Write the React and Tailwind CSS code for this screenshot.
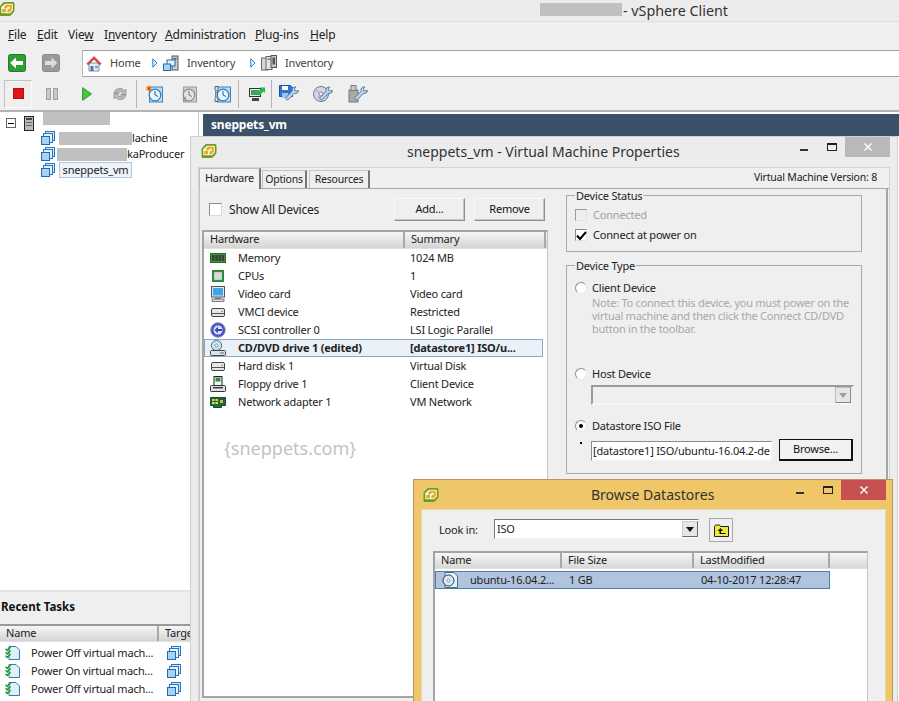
import React from "react";

const Logo = ({ className = "" }) => (
  <svg viewBox="0 0 16 16" width="16" height="16" className={className}>
    <path d="M5.500 1h8.500q1.500 0 1.500 1.500v7q0 1-.8 1.800l-2.700 2.900q-.8.800-2 .8H2q-1.500 0-1.500-1.500V6.500q0-1 .8-1.800l2.700-2.900Q4.500 1 5.500 1z" fill="#6f9c1f" />
    <path d="M6 2.800h7.200q.6 0 .6.600v6l-2.700 2.800H2.800q-.6 0-.6-.6V6z" fill="#f7f7e6" />
    <path d="M6.800 3.800h6v5.200l-2.300 2.300H8.300V9.300l1.500-1.600h1V5.800H8.800L7.200 7.500H5.300V5.500z" fill="#f0a91c" />
    <path d="M3.200 8h3.800v3.300H3.200z" fill="#e0a928" />
  </svg>
);

const VmIcon = () => (
  <svg viewBox="0 0 14 14" width="14" height="14" className="shrink-0">
    <rect x="4.500" y="0.500" width="9" height="9" fill="#d6e9f8" stroke="#2477c4" />
    <rect x="2.500" y="2.500" width="9" height="9" fill="#e8f3fb" stroke="#2477c4" />
    <rect x="0.500" y="5.500" width="8" height="8" fill="#a9d2f0" stroke="#1e6cb5" />
  </svg>
);

const Back = ({ dis }) => (
  <svg viewBox="0 0 18 18" width="18" height="18">
    <rect x="0.500" y="0.500" width="17" height="17" rx="2" fill={dis ? "#9a9a9a" : "#2f9e35"} stroke={dis ? "#8a8a8a" : "#1f7d26"} />
    <path d={dis ? "M3 7h6.500V3.500L15.300 9l-5.800 5.500V11H3z" : "M15 7H8V3.500L2.200 9 8 14.500V11h7z"} fill={dis ? "#dcdcdc" : "#fff"} />
  </svg>
);

const Crumb = () => (
  <svg viewBox="0 0 6 10" width="6" height="10" className="shrink-0"><path d="M.8.8 5 5 .8 9.200z" fill="#dff0ff" stroke="#1e83e0" /></svg>
);

const Home = () => (
  <svg viewBox="0 0 16 17" width="16" height="17">
    <path d="M3 8v8h10V8z" fill="#eef2f7" stroke="#7d8ea3" />
    <path d="M.8 8.800 8 1.500l7.200 7.300-1.500 1L8 4.200 2.300 9.800z" fill="#d9483b" stroke="#a83226" strokeWidth=".6" />
    <rect x="4.500" y="11" width="3" height="5" fill="#3d78c2" />
    <rect x="9" y="10.500" width="3" height="3" fill="#7fb0e0" />
  </svg>
);

const InvA = () => (
  <svg viewBox="0 0 16 16" width="16" height="16">
    <rect x="9" y="1" width="6" height="14" fill="#c9ced4" stroke="#555" />
    <rect x="10.500" y="3" width="3" height="1.500" fill="#555" />
    <rect x="4" y="5" width="8" height="6" fill="#e8f3fb" stroke="#1e6cb5" />
    <rect x="0.500" y="9" width="7" height="6.500" fill="#a9d2f0" stroke="#1e6cb5" />
  </svg>
);

const InvB = () => (
  <svg viewBox="0 0 16 16" width="16" height="16">
    <rect x="0.500" y="3" width="6" height="12" fill="#d5d8db" stroke="#666" />
    <rect x="5" y="1.500" width="6" height="13" fill="#e2e4e6" stroke="#666" />
    <rect x="10" y="0.500" width="5.500" height="12" fill="#c5c8cb" stroke="#555" />
    <rect x="11.500" y="2.500" width="2.500" height="7" fill="#555" />
    <rect x="6.500" y="3.500" width="3" height="1.500" fill="#777" />
  </svg>
);

const Clock = ({ gray, tool, spark }) => (
  <svg viewBox="0 0 18 18" width="18" height="18">
    <rect x="4.500" y="2" width="13" height="15" fill={gray ? "#cfcfcf" : "#bcdcf3"} stroke={gray ? "#9a9a9a" : "#3a86c8"} />
    <circle cx="10" cy="10" r="5.800" fill={gray ? "#e2e2e2" : "#eaf5fc"} stroke={gray ? "#8e8e8e" : "#2d78bb"} strokeWidth="1.200" />
    <path d="M10 6v4l3 1.500" fill="none" stroke={gray ? "#777" : "#1d5e9c"} />
    {spark && <path d="M4 0l.8 2.200L7 1.400 5.600 3.400 7.600 5 5 4.800 4 7 3 4.800.4 5l2-1.600L1 1.400l2.200.8z" fill="#e8471d" stroke="#f8c030" strokeWidth=".4" />}
    {tool && <path d="M2 1.500h3v3l-.7 1v7l.7 1v3H2v-3l.7-1v-7L2 4.500z" fill="#cfe4f4" stroke="#264a70" strokeWidth=".8" />}
    {gray && <path d="M7 17v-6l-4 3z" fill="#999" />}
  </svg>
);

const Spanner = ({ children }) => (
  <svg viewBox="0 0 20 18" width="20" height="18">
    {children}
    <path d="M19.500 5.500a3 3 0 0 1-4 2.800L9.500 14.500a1.600 1.600 0 0 1-2.300-2.200l6-6.200a3 3 0 0 1 3.800-4l-1.600 1.700.6 1.800 1.800.4z" fill="#b9d4ec" stroke="#4d6f92" strokeWidth=".9" />
  </svg>
);

const Hw = ({ t }) => {
  const common = { viewBox: "0 0 16 16", width: 16, height: 16 };
  if (t === "mem") return <svg {...common}><rect x="0.500" y="3.500" width="15" height="9" fill="#3f9a3c" stroke="#276b27" /><rect x="2" y="5" width="2.500" height="6" fill="#36423a" /><rect x="5.200" y="5" width="2.500" height="6" fill="#36423a" /><rect x="8.400" y="5" width="2.500" height="6" fill="#36423a" /><rect x="11.600" y="5" width="2.500" height="6" fill="#36423a" /></svg>;
  if (t === "cpu") return <svg {...common}><rect x="2" y="2" width="12" height="12" fill="#1f8a2d" /><rect x="4" y="4" width="8" height="8" fill="#d8dbd9" stroke="#97a097" strokeWidth=".5" /></svg>;
  if (t === "vid") return <svg {...common}><rect x="1.500" y="0.500" width="13" height="10.500" fill="#e3e6ea" stroke="#4c5560" /><rect x="3" y="2" width="10" height="7.500" fill="#3fa4ec" /><path d="M5 11.500h6v1.500H5z" fill="#79828c" /><rect x="2" y="13" width="12" height="2.500" fill="#d4d8dc" stroke="#4c5560" strokeWidth=".7" /></svg>;
  if (t === "drv") return <svg {...common}><rect x="1.500" y="4.500" width="13" height="8" rx="1.500" fill="#e6e6e6" stroke="#444" /><path d="M2 9.500h12" stroke="#555" /><rect x="11.500" y="7" width="1.500" height="1" fill="#5fa04e" /></svg>;
  if (t === "scsi") return <svg {...common}><circle cx="8" cy="8" r="7.200" fill="#4a55c8" stroke="#6f7fb8" /><circle cx="8" cy="8" r="4.500" fill="#dfe5fb" /><path d="M12 7H8V4.800L4.400 8 8 11.200V9h4z" fill="#3b46b4" /></svg>;
  if (t === "cd") return <svg {...common}><ellipse cx="6.500" cy="5.500" rx="5.200" ry="5" fill="#c6e2f6" stroke="#5a6c80" /><circle cx="6.500" cy="5.500" r="1.400" fill="#fff" stroke="#5a6c80" strokeWidth=".6" /><rect x="0.500" y="10.500" width="15" height="5" rx="1" fill="#dfe3e6" stroke="#444" /><path d="M10 13h4" stroke="#666" /></svg>;
  if (t === "flp") return <svg {...common}><rect x="4" y="0.500" width="8" height="9" fill="#f4f4f4" stroke="#1d1d1d" /><rect x="5.500" y="1.500" width="5" height="4" fill="#2f8f3d" /><rect x="0.500" y="9.500" width="15" height="6" rx="1" fill="#dfe3e6" stroke="#333" /><rect x="3" y="11" width="10" height="1.400" fill="#333" /></svg>;
  return <svg {...common}><path d="M0.500 3.500h15v8h-4v2h-8v-2h-3z" fill="#1c6f3a" stroke="#154a29" /><rect x="2" y="5" width="2.600" height="2" fill="#e6c53c" /><rect x="5.400" y="5" width="2.600" height="2" fill="#e6c53c" /><rect x="2" y="8" width="2.600" height="2" fill="#d7dd5a" /><rect x="5.400" y="8" width="2.600" height="2" fill="#d7dd5a" /><rect x="9.500" y="5.500" width="4" height="4" fill="#a8c95b" stroke="#222" strokeWidth=".6" /></svg>;
};

const Task = () => (
  <svg viewBox="0 0 15 14" width="15" height="14" className="shrink-0">
    <path d="M4 .5h7l3.500 3.500v9.500H4z" fill="#ddf0fa" stroke="#3b7aa8" />
    <path d="M.6 2.800l1.600 1.600L5.600 1" fill="none" stroke="#1f9a2c" strokeWidth="1.500" />
    <path d="M.6 6.300l1.600 1.600 3.400-3.400" fill="none" stroke="#1f9a2c" strokeWidth="1.500" />
    <path d="M.6 9.800l1.600 1.600 3.400-3.400" fill="none" stroke="#1f9a2c" strokeWidth="1.500" />
  </svg>
);

const Controls = ({ red }) => (
  <div className="flex items-start shrink-0">
    <div className="w-[8px] h-[2px] bg-[#333] mt-[12px] mr-[19px]" />
    <div className="w-[10px] h-[8px] border border-[#222] border-t-2 mt-[6px] mr-[8px]" />
    <div className={`w-[45px] h-[20px] flex items-center justify-center ${red ? "bg-[#c75050]" : "bg-[#b9b9b9]"}`}>
      <svg viewBox="0 0 8 8" width="8" height="8"><path d="M.5.5l7 7M7.500.5l-7 7" stroke="#fff" strokeWidth="1.400" /></svg>
    </div>
  </div>
);

const Btn = ({ children, className = "" }) => (
  <button className={`h-[23px] bg-[#efefef] text-[#111] border border-[#f8f8f8] border-r-[#8f8f8f] border-b-[#8f8f8f] shadow-[inset_-1px_-1px_0_#c4c4c4] ${className}`}>{children}</button>
);

const TH = ({ w, children, last }) => (
  <div style={{ width: w }} className={`h-full flex items-center pl-[6px] pb-[1px] text-[#222] ${last ? "" : "border-r-2 border-r-[#a8a8a8]"} ${w === undefined ? "flex-1" : "shrink-0"}`}>{children}</div>
);

const hw = [
  ["mem", "Memory", "1024 MB"],
  ["cpu", "CPUs", "1"],
  ["vid", "Video card", "Video card"],
  ["drv", "VMCI device", "Restricted"],
  ["scsi", "SCSI controller 0", "LSI Logic Parallel"],
  ["cd", "CD/DVD drive 1 (edited)", "[datastore1] ISO/u..."],
  ["drv", "Hard disk 1", "Virtual Disk"],
  ["flp", "Floppy drive 1", "Client Device"],
  ["net", "Network adapter 1", "VM Network"],
];

const Radio = ({ on }) => (
  <span className="w-[12px] h-[12px] rounded-full bg-white border border-[#8c8c8c] border-r-[#e8e8e8] border-b-[#e8e8e8] flex items-center justify-center shrink-0">
    {on && <span className="w-[4px] h-[4px] rounded-full bg-black" />}
  </span>
);

const Group = ({ title, className = "", children }) => (
  <div className={`relative border border-[#a9a9a9] ml-[18px] w-[296px] ${className}`}>
    <span className="absolute left-[8px] top-[-7px] bg-[#efefef] px-[1px] text-[#222] leading-[14px]">{title}</span>
    {children}
  </div>
);

function VmWindow() {
  return (
    <div className="absolute left-[190px] top-[136px] w-[708px] h-[570px] bg-[#ececec] border border-[#cfcfcf] px-[7px] flex flex-col">
      <div className="h-[30px] flex shrink-0 relative">
        <Logo className="mt-[6px] ml-[3px]" />
        <div className="absolute left-[209px] top-[5px] text-[14px] tracking-normal text-[#333] whitespace-nowrap leading-[20px]">sneppets_vm - Virtual Machine Properties</div>
        <div className="ml-auto"><Controls /></div>
      </div>
      <div className="flex-1 border border-[#d4d4d4] bg-[#efefef] flex flex-col">
        <div className="h-[21px] flex items-end border-b border-b-[#a8a8a8] relative shrink-0">
          <div className="h-[21px] w-[62px] bg-[#f2f2f2] border border-[#bdbdbd] border-b-0 border-r-2 border-r-[#777] flex items-center justify-center text-[#222] -mb-[1px] z-10 pb-[1px]">Hardware</div>
          <div className="h-[18px] w-[45px] ml-[1px] bg-[#efefef] border border-[#c4c4c4] border-b-0 border-r-2 border-r-[#777] flex items-center justify-center text-[10.5px] text-[#222]">Options</div>
          <div className="h-[18px] w-[61px] ml-[2px] bg-[#efefef] border border-[#c4c4c4] border-b-0 border-r-2 border-r-[#777] flex items-center justify-center text-[10.5px] text-[#222]">Resources</div>
          <div className="absolute right-[12px] top-[2px] text-[10.5px] text-[#222] leading-[14px]">Virtual Machine Version: 8</div>
        </div>
        <div className="flex-1 flex border-r-2 border-r-[#a6a6a6] border-l border-l-[#c8c8c8] mr-[1px]">
          <div className="w-[348px] shrink-0 pl-[2px] flex flex-col">
            <div className="h-[41px] flex items-start shrink-0">
              <span className="w-[13px] h-[13px] bg-white border border-[#8c8c8c] border-r-[#d8d8d8] border-b-[#d8d8d8] mt-[14px] ml-[7px]" />
              <span className="mt-[14px] ml-[7px] text-[12px] text-[#222] leading-[14px]">Show All Devices</span>
              <Btn className="w-[71px] ml-auto mt-[9px] mr-[9px]">Add...</Btn>
              <Btn className="w-[71px] mt-[9px] mr-[3px]">Remove</Btn>
            </div>
            <div className="flex-1 mb-[6px] border-2 border-[#a4a4a4] border-r border-r-[#c4c4c4] bg-white flex flex-col">
              <div className="h-[17px] flex bg-linear-to-b from-[#f6f6f6] to-[#d4d4d4] border-b border-b-[#e0e0e0] shrink-0">
                <TH w={201}>Hardware</TH>
                <TH w={141}>Summary</TH>
              </div>
              {hw.map(([t, a, b], i) => {
                const sel = t === "cd";
                return (
                  <div key={i} className={`h-[18px] flex items-center shrink-0 w-[339px] ${sel ? "bg-[#e9f0f8] border border-[#8aa9c6] font-bold" : ""}`}>
                    <span className={`flex ${sel ? "w-[33px] pl-[5px]" : "w-[34px] pl-[6px]"}`}><Hw t={t} /></span>
                    <span className="w-[172px] whitespace-nowrap text-[#222]">{a}</span>
                    <span className="whitespace-nowrap text-[#222]">{b}</span>
                  </div>
                );
              })}
              <div className="mt-[25px] ml-[20px] text-[18px] tracking-normal text-[#c3c3c3] leading-[24px]">{"{sneppets.com}"}</div>
            </div>
          </div>
          <div className="flex-1 flex flex-col pt-[6px]">
            <Group title="Device Status" className="h-[57px]">
              <div className="flex items-center h-[14px] mt-[12px] ml-[8px]">
                <span className="w-[12px] h-[12px] bg-[#efefef] border border-[#9a9a9a] border-r-[#e4e4e4] border-b-[#e4e4e4]" />
                <span className="ml-[6px] text-[#a0a0a0]">Connected</span>
              </div>
              <div className="flex items-center h-[14px] mt-[6px] ml-[8px]">
                <span className="w-[12px] h-[12px] bg-white border border-[#8c8c8c] border-r-[#e4e4e4] border-b-[#e4e4e4] flex items-center justify-center">
                  <svg viewBox="0 0 12 12" width="12" height="12" className="shrink-0"><path d="M2 6.500l3 3.500 6-7" fill="none" stroke="#000" strokeWidth="2" /></svg>
                </span>
                <span className="ml-[6px] text-[#222]">Connect at power on</span>
              </div>
            </Group>
            <Group title="Device Type" className="h-[209px] mt-[13px]">
              <div className="flex items-center h-[14px] mt-[15px] ml-[8px]">
                <Radio /><span className="ml-[5px] text-[#222]">Client Device</span>
              </div>
              <div className="ml-[25px] text-[#a8a8a8] leading-[13px] tracking-[-0.25px] whitespace-nowrap mt-[1px]">
                <div>Note: To connect this device, you must power on the</div>
                <div>virtual machine and then click the Connect CD/DVD</div>
                <div>button in the toolbar.</div>
              </div>
              <div className="flex items-center h-[14px] mt-[32px] ml-[8px]">
                <Radio /><span className="ml-[5px] text-[#222]">Host Device</span>
              </div>
              <div className="ml-[24px] mt-[4px] w-[263px] h-[20px] border-2 border-[#9a9a9a] border-r-[#efefef] border-b-[#f6f6f6] flex justify-end items-center pr-[1px]">
                <div className="w-[16px] h-[16px] bg-[#e6e6e6] border border-[#bdbdbd] border-r-[#888] border-b-[#888] flex items-center justify-center">
                  <svg viewBox="0 0 8 5" width="8" height="5"><path d="M0 0h8L4 5z" fill="#a0a0a0" /></svg>
                </div>
              </div>
              <div className="flex items-center h-[14px] mt-[14px] ml-[8px]">
                <Radio on /><span className="ml-[5px] text-[#222]">Datastore ISO File</span>
              </div>
              <div className="flex ml-[13px] mt-[6px] items-start">
                <span className="w-[2px] h-[2px] bg-black mt-[3px] mr-[9px]" />
                <div className="w-[181px] h-[20px] mt-[2px] bg-white border border-[#8c8c8c] border-r-[#f4f4f4] border-b-[#f4f4f4] flex items-center pl-[1px] overflow-hidden whitespace-nowrap text-[#222]">[datastore1] ISO/ubuntu-16.04.2-de</div>
                <button className="w-[74px] h-[22px] ml-[7px] border-2 border-[#111] border-t border-l bg-[#f2f2f2] text-[#111]">Browse...</button>
              </div>
            </Group>
          </div>
        </div>
      </div>
    </div>
  );
}

function BrowseWindow() {
  return (
    <div className="absolute left-[413px] top-[479px] w-[480px] h-[240px] bg-[#efc668] border border-[#b89a58] flex flex-col pl-[7px] pr-[6px]">
      <div className="h-[29px] shrink-0 relative flex">
        <Logo className="mt-[7px] ml-[2px]" />
        <div className="absolute left-[170px] top-[5px] text-[14px] tracking-normal text-[#333] leading-[20px] whitespace-nowrap">Browse Datastores</div>
        <div className="ml-auto"><Controls red /></div>
      </div>
      <div className="flex-1 bg-[#efefef] border border-[#e8d9ae]">
        <div className="h-[40px] flex items-start">
          <span className="ml-[17px] mt-[13px] w-[55px] leading-[14px] text-[#222]">Look in:</span>
          <div className="mt-[9px] w-[205px] h-[20px] bg-white border border-[#777] border-r-[#f4f4f4] border-b-[#f4f4f4] flex items-center pl-[2px] text-[#222]">
            ISO
            <div className="ml-auto w-[16px] h-[16px] bg-[#e6e6e6] border border-[#ccc] border-r-[#666] border-b-[#666] flex items-center justify-center">
              <svg viewBox="0 0 8 5" width="8" height="5"><path d="M0 0h8L4 5z" fill="#111" /></svg>
            </div>
          </div>
          <div className="ml-[10px] mt-[8px] w-[24px] h-[24px] border border-[#a8a8a8] flex items-center justify-center">
            <svg viewBox="0 0 15 13" width="15" height="13"><path d="M.5 12.500v-10l1-1.500h4l1 1.500h8v10z" fill="#f1ea3c" stroke="#222" /><path d="M6.500 4 3.500 7h2v3h6V9H7V7h2z" fill="#111" /></svg>
          </div>
        </div>
        <div className="ml-[11px] mt-[1px] w-[435px] h-[160px] border-2 border-[#a4a4a4] border-r border-r-[#c4c4c4] bg-white">
          <div className="h-[16px] flex bg-linear-to-b from-[#f6f6f6] to-[#d8d8d8] border-b border-b-[#e0e0e0]">
            <TH w={127}>Name</TH>
            <TH w={132}>File Size</TH>
            <TH w={136}>LastModified</TH>
            <TH last />
          </div>
          <div className="h-[18px] w-[395px] mt-[2px] bg-[#b0c4de] border border-[#4a7fae] flex items-center text-[#222]">
            <span className="ml-[6px] w-[28px] flex">
              <svg viewBox="0 0 16 16" width="16" height="16"><path d="M3 .5h9l3.500 3.500v11.500H3z" fill="#e2f3fb" stroke="#4a6f8c" /><circle cx="6.500" cy="8.500" r="5.500" fill="#dce9f4" stroke="#333" /><circle cx="6.500" cy="8.500" r="1.400" fill="#fff" stroke="#3a7bc0" strokeWidth=".7" /></svg>
            </span>
            <span className="w-[99px] whitespace-nowrap">ubuntu-16.04.2...</span>
            <span className="w-[132px]">1 GB</span>
            <span className="whitespace-nowrap">04-10-2017 12:28:47</span>
          </div>
        </div>
      </div>
    </div>
  );
}

const Sep = ({ ml }) => <div style={{ marginLeft: ml }} className="w-px h-[28px] bg-[#b4b4b4] shrink-0" />;

export default function App() {
  return (
    <div className="relative w-[899px] h-[701px] overflow-hidden bg-white font-['Noto_Sans',sans-serif] text-[11px] tracking-[-0.2px] flex flex-col">
      <div className="h-[22px] bg-[#ececec] border-b border-b-[#dedede] flex items-center relative shrink-0">
        <Logo className="-ml-[1px] -mt-[3px]" />
        <div className="absolute left-[540px] top-[3px] w-[82px] h-[13px] bg-[#c0c0c0]" />
        <div className="absolute left-[623px] top-0 text-[14.3px] tracking-normal text-[#333] leading-[21px]">- vSphere Client</div>
      </div>
      <div className="h-[28px] bg-[#efefef] flex items-center shrink-0 text-[12px] text-[#222] pb-[3px] pl-[8px]">
        <span className="w-[29px] shrink-0"><u>F</u>ile</span>
        <span className="w-[31px] shrink-0"><u>E</u>dit</span>
        <span className="w-[36px] shrink-0">Vie<u>w</u></span>
        <span className="w-[61px] shrink-0">I<u>n</u>ventory</span>
        <span className="w-[90px] shrink-0"><u>A</u>dministration</span>
        <span className="w-[55px] shrink-0"><u>P</u>lug-ins</span>
        <span><u>H</u>elp</span>
      </div>
      <div className="h-[27px] bg-[#efefef] flex items-center shrink-0">
        <span className="ml-[8px] flex pb-[2px]"><Back /></span>
        <span className="ml-[16px] flex pb-[2px]"><Back dis /></span>
        <div className="ml-[22px] flex-1 h-[27px] bg-white border-y border-y-[#a0a0a0] border-l border-l-[#b8b8b8] flex items-center text-[#444] pb-[1px]">
          <span className="ml-[3px] flex"><Home /></span>
          <span className="ml-[8px] w-[42px]">Home</span>
          <Crumb />
          <span className="ml-[5px] flex"><InvA /></span>
          <span className="ml-[8px] w-[63px]">Inventory</span>
          <Crumb />
          <span className="ml-[5px] flex"><InvB /></span>
          <span className="ml-[8px]">Inventory</span>
        </div>
      </div>
      <div className="h-[35px] bg-[#efefef] border-b-2 border-b-[#b4b4b4] flex items-center shrink-0">
        <div className="ml-[4px] w-[28px] h-[28px] border border-[#c0c0c0] border-r-[#fafafa] border-b-[#fafafa] flex items-center justify-center shrink-0">
          <div className="w-[11px] h-[11px] bg-[#e81010] border border-[#b01010]" />
        </div>
        <svg viewBox="0 0 12 12" width="12" height="12" className="ml-[14px] shrink-0"><rect x="0.500" y="0.500" width="4" height="11" fill="#c8c8c8" stroke="#a0a0a0" /><rect x="7.500" y="0.500" width="4" height="11" fill="#c8c8c8" stroke="#a0a0a0" /></svg>
        <svg viewBox="0 0 10 14" width="10" height="14" className="ml-[24px] shrink-0"><path d="M.7.7 9.400 7 .7 13.300z" fill="#4cc83a" stroke="#2a8f22" /></svg>
        <svg viewBox="0 0 16 16" width="16" height="16" className="ml-[20px] shrink-0"><path d="M2 7a6 6 0 0 1 10.500-2.500L14 3v6H8.500l2-2A3.200 3.200 0 0 0 5 7.500zM14 9a6 6 0 0 1-10.500 2.500L2 13V7h5.500l-2 2A3.200 3.200 0 0 0 11 8.500z" fill="#b8b8b8" stroke="#8e8e8e" strokeWidth=".7" /></svg>
        <Sep ml={8} />
        <span className="ml-[8px] flex"><Clock spark /></span>
        <span className="ml-[16px] flex"><Clock gray /></span>
        <span className="ml-[16px] flex"><Clock tool /></span>
        <Sep ml={7} />
        <svg viewBox="0 0 16 16" width="16" height="16" className="ml-[10px] shrink-0"><rect x="0.500" y="2.500" width="11" height="8" fill="#e8eef4" stroke="#333" /><rect x="2" y="4" width="8" height="5" fill="#3aa55a" /><rect x="3" y="12" width="7" height="3" fill="#444" /><path d="M8 7l4-4-1.500-1.500H16V7l-1.500-1.500-4 4z" fill="#28b84a" /></svg>
        <Sep ml={6} />
        <span className="ml-[7px] flex"><Spanner><path d="M.5.5h11l2 2v9h-13z" fill="#2e74d8" stroke="#1e4f9e" /><rect x="3" y="1" width="6" height="4" fill="#fff" /><rect x="3" y="8" width="6" height="5" fill="#9ec4f0" /></Spanner></span>
        <span className="ml-[14px] flex"><Spanner><circle cx="8" cy="9" r="7.500" fill="#d6d6ec" stroke="#777" /><circle cx="8" cy="9" r="2" fill="#fff" stroke="#777" /><path d="M3 5l4 3M5 13l3-3" stroke="#d9a0d0" strokeWidth="2" /></Spanner></span>
        <span className="ml-[15px] flex"><Spanner><rect x="1" y="5" width="9" height="12" fill="#a8a8a8" stroke="#7a7a7a" /><rect x="3" y="0.500" width="5" height="5" fill="#c8c8c8" stroke="#7a7a7a" /></Spanner></span>
      </div>
      <div className="flex-1 flex min-h-0">
        <div className="w-[199px] shrink-0 flex flex-col border-r border-r-[#c4c4c4] pt-[1px]">
          <div className="flex-1 bg-white text-[#222]">
            <div className="h-[17px] flex items-center pt-[3px]">
              <span className="ml-[6px] w-[10px] h-[10px] border border-[#666] flex items-center justify-center"><span className="w-[6px] h-px bg-black" /></span>
              <svg viewBox="0 0 10 15" width="10" height="15" className="ml-[8px]"><rect x="0.500" y="0.500" width="9" height="14" fill="#bbb" stroke="#222" /><rect x="2" y="2" width="6" height="2" fill="#444" /><rect x="2" y="6" width="6" height="1" fill="#666" /><rect x="2" y="9" width="6" height="1" fill="#666" /></svg>
              <span className="ml-[9px] w-[67px] h-[13px] bg-[#c0c0c0] -mt-[9px]" />
            </div>
            <div className="h-[16px] flex items-center pl-[41px]">
              <VmIcon /><span className="ml-[4px] w-[73px] h-[13px] bg-[#c0c0c0]" /><span className="whitespace-nowrap">lachine</span>
            </div>
            <div className="h-[16px] flex items-center pl-[41px]">
              <VmIcon /><span className="ml-[2px] w-[70px] h-[13px] bg-[#c0c0c0]" /><span className="whitespace-nowrap">kaProducer</span>
            </div>
            <div className="h-[16px] flex items-center pl-[41px]">
              <VmIcon /><span className="ml-[4px] h-[16px] w-[73px] justify-center bg-[#eef3f9] border border-[#b0c8e0] flex items-center">sneppets_vm</span>
            </div>
          </div>
          <div className="h-[36px] bg-[#efefef] border-y-2 border-t-[#e4e4e4] border-b-[#9a9a9a] flex items-center font-bold text-[11.5px] tracking-normal text-[#111] shrink-0 pb-[2px]"><span className="pl-[1px]">Recent Tasks</span></div>
          <div className="h-[75px] bg-white text-[#222] shrink-0">
            <div className="h-[16px] mb-[2px] flex bg-linear-to-b from-[#f6f6f6] to-[#d4d4d4] border-b border-b-[#e0e0e0]">
              <TH w={159}>Name</TH>
              <TH w={40}>Target</TH>
            </div>
            {["Power Off virtual mach...", "Power On virtual mach...", "Power Off virtual mach..."].map((t, i) => (
              <div key={i} className="h-[18px] flex items-center">
                <span className="ml-[5px] w-[26px] flex"><Task /></span>
                <span className="w-[136px] whitespace-nowrap">{t}</span>
                <VmIcon />
              </div>
            ))}
          </div>
        </div>
        <div className="flex-1 flex flex-col pl-[4px] pt-[2px]">
          <div className="h-[22px] bg-[#3b5069] text-white font-bold text-[12px] flex items-center pl-[8px]">sneppets_vm</div>
        </div>
      </div>
      <VmWindow />
      <BrowseWindow />
    </div>
  );
}
